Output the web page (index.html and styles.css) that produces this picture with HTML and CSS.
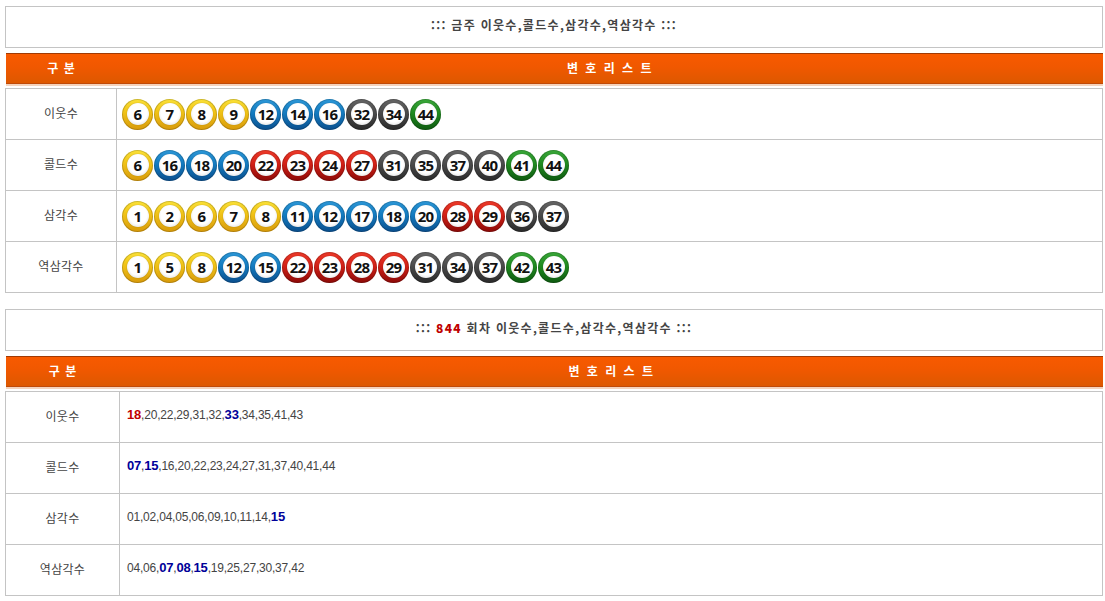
FILE: index.html
```html
<!DOCTYPE html>
<html lang="ko">
<head>
<meta charset="utf-8">
<title>이웃수 콜드수 삼각수 역삼각수</title>
<link rel="stylesheet" href="styles.css">
</head>
<body>
<div class="wrap">
  <section class="sec">
    <div class="title"><span>::: 금주 이웃수,콜드수,삼각수,역삼각수 :::</span></div>
    <div class="bar"><div class="c1">구 분</div><div class="c2">변 호 리 스 트</div></div>
    <div class="tbl">
      <div class="row">
        <div class="lab">이웃수</div>
        <div class="val balls">
          <span class="ball y"><i>6</i></span><span class="ball y"><i>7</i></span><span class="ball y"><i>8</i></span><span class="ball y"><i>9</i></span><span class="ball b"><i>12</i></span><span class="ball b"><i>14</i></span><span class="ball b"><i>16</i></span><span class="ball g"><i>32</i></span><span class="ball g"><i>34</i></span><span class="ball gr"><i>44</i></span>
        </div>
      </div>
      <div class="row">
        <div class="lab">콜드수</div>
        <div class="val balls">
          <span class="ball y"><i>6</i></span><span class="ball b"><i>16</i></span><span class="ball b"><i>18</i></span><span class="ball b"><i>20</i></span><span class="ball r"><i>22</i></span><span class="ball r"><i>23</i></span><span class="ball r"><i>24</i></span><span class="ball r"><i>27</i></span><span class="ball g"><i>31</i></span><span class="ball g"><i>35</i></span><span class="ball g"><i>37</i></span><span class="ball g"><i>40</i></span><span class="ball gr"><i>41</i></span><span class="ball gr"><i>44</i></span>
        </div>
      </div>
      <div class="row">
        <div class="lab">삼각수</div>
        <div class="val balls">
          <span class="ball y"><i>1</i></span><span class="ball y"><i>2</i></span><span class="ball y"><i>6</i></span><span class="ball y"><i>7</i></span><span class="ball y"><i>8</i></span><span class="ball b"><i>11</i></span><span class="ball b"><i>12</i></span><span class="ball b"><i>17</i></span><span class="ball b"><i>18</i></span><span class="ball b"><i>20</i></span><span class="ball r"><i>28</i></span><span class="ball r"><i>29</i></span><span class="ball g"><i>36</i></span><span class="ball g"><i>37</i></span>
        </div>
      </div>
      <div class="row">
        <div class="lab">역삼각수</div>
        <div class="val balls">
          <span class="ball y"><i>1</i></span><span class="ball y"><i>5</i></span><span class="ball y"><i>8</i></span><span class="ball b"><i>12</i></span><span class="ball b"><i>15</i></span><span class="ball r"><i>22</i></span><span class="ball r"><i>23</i></span><span class="ball r"><i>28</i></span><span class="ball r"><i>29</i></span><span class="ball g"><i>31</i></span><span class="ball g"><i>34</i></span><span class="ball g"><i>37</i></span><span class="ball gr"><i>42</i></span><span class="ball gr"><i>43</i></span>
        </div>
      </div>
    </div>
  </section>

  <section class="sec sec2">
    <div class="title"><span>::: <b class="red">844</b> 회차 이웃수,콜드수,삼각수,역삼각수 :::</span></div>
    <div class="bar bar2"><div class="c1">구 분</div><div class="c2">변 호 리 스 트</div></div>
    <div class="tbl tbl2">
      <div class="row">
        <div class="lab">이웃수</div>
        <div class="val nums"><span><b class="red">18</b>,20,22,29,31,32,<b class="blue">33</b>,34,35,41,43</span></div>
      </div>
      <div class="row">
        <div class="lab">콜드수</div>
        <div class="val nums"><span><b class="blue">07</b>,<b class="blue">15</b>,16,20,22,23,24,27,31,37,40,41,44</span></div>
      </div>
      <div class="row">
        <div class="lab">삼각수</div>
        <div class="val nums"><span>01,02,04,05,06,09,10,11,14,<b class="blue">15</b></span></div>
      </div>
      <div class="row">
        <div class="lab">역삼각수</div>
        <div class="val nums"><span>04,06,<b class="blue">07</b>,<b class="blue">08</b>,<b class="blue">15</b>,19,25,27,30,37,42</span></div>
      </div>
    </div>
  </section>
</div>
</body>
</html>
```

FILE: styles.css
```css
html, body {
  margin: 0;
  padding: 0;
  background: #fff;
}
body {
  font-family: "Noto Sans CJK KR", "Liberation Sans", sans-serif;
  font-size: 12px;
  color: #444;
}
.wrap {
  width: 1098px;
  padding: 6px 0 0 5px;
}
.sec2 {
  margin-top: 16px;
}
.title {
  height: 40px;
  border: 1px solid #c4c4c4;
  display: flex;
  align-items: center;
  justify-content: center;
  font-weight: bold;
  color: #444;
  font-size: 12px;
  letter-spacing: 1.3px;
  padding-bottom: 5px;
  box-sizing: content-box;
  height: 35px;
}
.red { color: #c00000; }
.blue { color: #000099; }
.bar {
  margin-top: 5px;
  margin-left: 1px;
  height: 26px;
  padding-bottom: 3px;
  border-top: 1px solid #a03a04;
  border-bottom: 1px solid #c04a08;
  background: linear-gradient(#f85a00, #f05800 45%, #dd5800);
  box-shadow: 0 2px 0 #f4d2bc;
  display: flex;
  align-items: center;
  color: #fff;
  font-weight: bold;
  font-size: 12px;
}
.bar .c1 {
  width: 111px;
  text-align: center;
  letter-spacing: 1px;
}
.bar .c2 {
  flex: 1;
  text-align: center;
  letter-spacing: 1.5px;
  word-spacing: 1px;
}
.bar2 .c1 { width: 114px; }
.tbl {
  margin-top: 4px;
  border: 1px solid #c4c4c4;
}
.row {
  display: flex;
  height: 50px;
}
.row + .row {
  border-top: 1px solid #c4c4c4;
}
.lab {
  width: 111px;
  flex: none;
  border-right: 1px solid #c4c4c4;
  display: flex;
  align-items: center;
  justify-content: center;
  color: #444;
  padding-bottom: 4px;
  box-sizing: border-box;
  letter-spacing: 0.3px;
}
.tbl2 .lab { width: 114px; }
.val {
  flex: 1;
  display: flex;
  align-items: center;
}
.balls {
  padding-left: 5px;
  gap: 1px;
}
.ball {
  width: 31px;
  height: 31px;
  border-radius: 50%;
  display: flex;
  align-items: center;
  justify-content: center;
  box-shadow: inset 0 0 0 1px rgba(0,0,0,0.18);
}
.ball i {
  font-style: normal;
  width: 22px;
  height: 22px;
  border-radius: 50%;
  background: radial-gradient(circle at 50% 45%, #fff 55%, #e4e4e4 80%, #b8b8b8 100%);
  display: flex;
  align-items: center;
  justify-content: center;
  font-family: "Open Sans", "DejaVu Sans", sans-serif;
  font-weight: bold;
  font-size: 15px;
  letter-spacing: -0.8px;
  color: #111;
  box-shadow: 0 0 1px rgba(0,0,0,0.4);
}
.ball.y  { background: linear-gradient(#fbe238, #f1c417 40%, #d89a0a); }
.ball.b  { background: linear-gradient(#2c98d8, #137bc0 45%, #0a4f8e); }
.ball.r  { background: linear-gradient(#ee3a2a, #d22016 45%, #8c0a08); }
.ball.g  { background: linear-gradient(#666, #4a4a4a 45%, #2a2a2a); }
.ball.gr { background: linear-gradient(#3aa83a, #1f8a1f 45%, #0e5a10); }
.nums {
  padding-left: 7px;
  padding-bottom: 5px;
  box-sizing: border-box;
  font-family: "Liberation Sans", "Noto Sans CJK KR", sans-serif;
  font-size: 12px;
  color: #444;
  letter-spacing: -0.2px;
}
.nums b {
  font-size: 13px;
}
```
